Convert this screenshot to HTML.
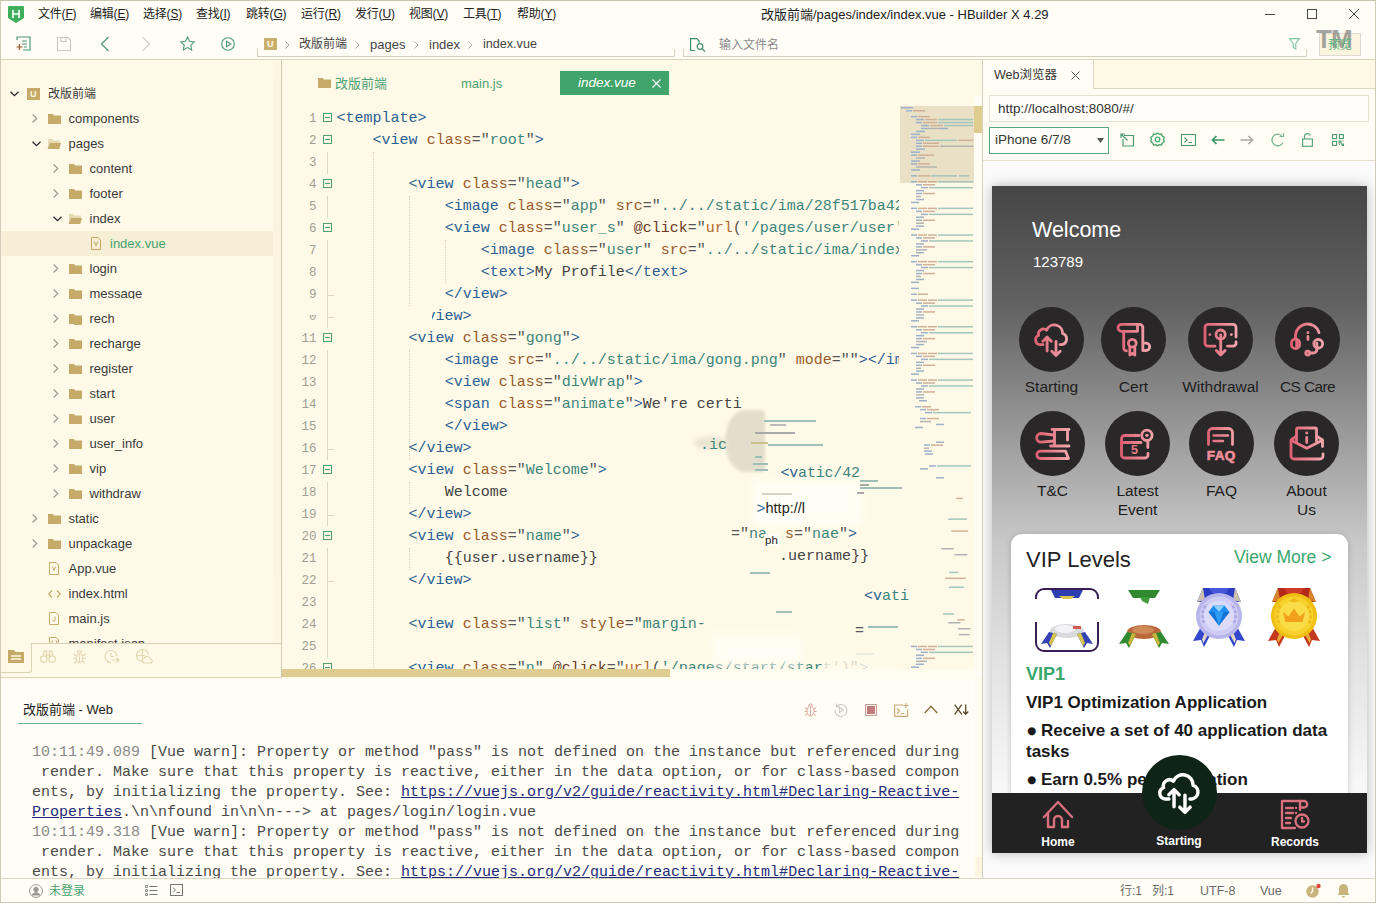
<!DOCTYPE html>
<html lang="zh-CN">
<head>
<meta charset="utf-8">
<title>HBuilder X</title>
<style>
*{box-sizing:border-box;margin:0;padding:0}
html,body{width:1376px;height:903px;overflow:hidden;background:#FFFAE8}
body{position:relative;font-family:"Liberation Sans","Noto Sans CJK SC",sans-serif;font-size:13px;color:#3b3b3b}
.abs{position:absolute}
.t{position:absolute;white-space:nowrap;line-height:1}
svg{position:absolute;overflow:visible}
/* top */
#top{position:absolute;left:0;top:0;width:1376px;height:59px;background:#FFFDF6}
#top .mi{position:absolute;top:7px;font-size:12px;line-height:15px;color:#222;white-space:nowrap;letter-spacing:-0.2px}
#top .mi u{text-decoration:underline;text-underline-offset:1px}
.bc{position:absolute;top:37px;font-size:13px;line-height:15px;color:#444;white-space:nowrap}
.bcs{position:absolute;top:38px;font-size:11px;line-height:13px;color:#999;font-family:"Liberation Sans",sans-serif}
/* sidebar */
#side{position:absolute;left:0;top:60px;width:281px;height:618px;background:#FFFAE8;overflow:hidden}
.row{position:absolute;left:0;width:273px;height:25px}
.row .lbl{position:absolute;top:5px;font-size:13px;line-height:16px;color:#3a3a3a;white-space:nowrap}
/* editor */
#ed{position:absolute;left:282px;top:60px;width:700px;height:618px;background:#FFFAE8;overflow:hidden}
.ln{position:absolute;left:0;width:700px;height:22px;font-family:"Liberation Mono","DejaVu Sans Mono",monospace;font-size:15px;line-height:22px;white-space:pre;color:#4a4a4a}
.ln .no{position:absolute;left:0;width:34.5px;text-align:right;color:#a0a092;font-size:12.500px}
.ln .cd{position:absolute;left:54.6px;top:0}
.ln .vl{position:absolute;left:45px;top:0;width:1px;height:22px;background:#ddd8c6}
.ln .tk{position:absolute;left:45px;top:11px;width:7px;height:1px;background:#ddd8c6}
.ev{color:#6b3a1e}
.tg{color:#2c5f93}.at{color:#9a5a2a}.st{color:#3d857b}.eq{color:#555}.fn{color:#b5662b}.tx{color:#444}
.fold{position:absolute;left:41px;top:5px;width:9px;height:9px;border:1px solid #4f9d73;background:#FFFAE8}
.fold:after{content:"";position:absolute;left:1px;top:3px;width:5px;height:1px;background:#4f9d73}
/* console */
#con{position:absolute;left:0;top:679px;width:982px;height:199px;background:#FFFDF5;overflow:hidden}
.cl{position:absolute;left:32px;font-family:"Liberation Mono","DejaVu Sans Mono",monospace;font-size:15px;line-height:20px;white-space:pre;color:#4a4a4a}
.cl .ts{color:#8a8a8a}
.cl .lk{color:#1e2c7a;text-decoration:underline}
/* status */
#stat{position:absolute;left:0;top:878px;width:1376px;height:25px;background:#FFFDF5;border-top:1px solid #dcd6bd}
/* right */
#right{position:absolute;left:983px;top:60px;width:393px;height:818px;background:#FFFCF3;overflow:hidden}
.cir{position:absolute;width:65px;height:65px;border-radius:50%;background:#2a2728}
.gl{position:absolute;width:120px;text-align:center;font-size:15.500px;line-height:19px;color:#1d1d1d}
.gtx{font-family:"Liberation Mono","DejaVu Sans Mono",monospace;font-size:15px;line-height:22px;white-space:pre;color:#4a4a4a}
</style>
</head>
<body>
<div id="top">
  <!-- app icon -->
  <svg style="left:8px;top:6px" width="16" height="17" viewBox="0 0 16 17"><path d="M1 0h14a1 1 0 0 1 1 1v11l-8 5-8-5V1a1 1 0 0 1 1-1z" fill="#3fae5a"/><path d="M5 4v8M11 4v8M5 8h6" stroke="#fff" stroke-width="1.6" fill="none"/></svg>
  <span class="mi" style="left:38px">文件(<u>F</u>)</span>
  <span class="mi" style="left:90px">编辑(<u>E</u>)</span>
  <span class="mi" style="left:143px">选择(<u>S</u>)</span>
  <span class="mi" style="left:196px">查找(<u>I</u>)</span>
  <span class="mi" style="left:246px">跳转(<u>G</u>)</span>
  <span class="mi" style="left:301px">运行(<u>R</u>)</span>
  <span class="mi" style="left:355px">发行(<u>U</u>)</span>
  <span class="mi" style="left:409px">视图(<u>V</u>)</span>
  <span class="mi" style="left:463px">工具(<u>T</u>)</span>
  <span class="mi" style="left:517px">帮助(<u>Y</u>)</span>
  <span class="t" id="title" style="left:761px;top:7px;font-size:13px;line-height:16px;color:#222">改版前端/pages/index/index.vue - HBuilder X 4.29</span>
</div>
<div class="abs" style="left:0;top:59px;width:1376px;height:1px;background:#d9d4ba"></div>
<div id="tb" class="abs" style="left:0;top:0;width:1376px;height:60px">
  <!-- window controls -->
  <div class="abs" style="left:1265px;top:14px;width:10px;height:1px;background:#444"></div>
  <div class="abs" style="left:1307px;top:9px;width:10px;height:10px;border:1px solid #444"></div>
  <svg style="left:1349px;top:9px" width="10" height="10" viewBox="0 0 10 10"><path d="M0 0L10 10M10 0L0 10" stroke="#444" stroke-width="1" fill="none"/></svg>
  <!-- toolbar icons -->
  <svg style="left:16px;top:36px" width="15" height="15" viewBox="0 0 15 15" fill="none" stroke="#4d9a73" stroke-width="1.2"><path d="M1 4V1h13v13H7"/><path d="M6 5h5M6 8h5M8 11h3"/><path d="M3.5 8v6M0.5 11h6" stroke="#a0522d"/></svg>
  <svg style="left:57px;top:37px" width="14" height="14" viewBox="0 0 14 14" fill="none" stroke="#c9c5b8" stroke-width="1.1"><path d="M.5.5h10.5l2.5 2.5v10.500H.5z"/><path d="M4 .5v4h5v-4"/></svg>
  <svg style="left:100px;top:36px" width="10" height="16" viewBox="0 0 10 16" fill="none" stroke="#4d9a73" stroke-width="1.3"><path d="M8.500 1L1.500 8l7 7"/></svg>
  <svg style="left:141px;top:36px" width="10" height="16" viewBox="0 0 10 16" fill="none" stroke="#d4d0c4" stroke-width="1.3"><path d="M1.500 1l7 7-7 7"/></svg>
  <svg style="left:180px;top:36px" width="15" height="15" viewBox="0 0 15 15" fill="none" stroke="#4d9a73" stroke-width="1.1"><path d="M7.500 1l2 4.300 4.700.600-3.400 3.300.8 4.700-4.100-2.300-4.100 2.300.8-4.700L.8 5.900l4.700-.6z"/></svg>
  <svg style="left:221px;top:37px" width="14" height="14" viewBox="0 0 14 14" fill="none" stroke="#4d9a73" stroke-width="1.1"><circle cx="7" cy="7" r="6.300"/><path d="M5.500 4.300v5.400L9.800 7z"/></svg>
  <!-- breadcrumb frame -->
  <div class="abs" style="left:257px;top:49px;width:418px;height:8px;border:1px solid #d6d1b8;border-top:none"></div>
  <div class="abs" style="left:264px;top:38px;width:13px;height:12px;background:#c9b06e"></div>
  <span class="t" style="left:267px;top:40px;font-size:9px;color:#fff8e0;font-weight:bold">U</span>
  <svg style="left:285px;top:41px" width="5" height="8" viewBox="0 0 5 8" fill="none" stroke="#aaa" stroke-width="1"><path d="M.5.500L4 4 .5 7.500"/></svg>
  <span class="bc" style="left:299px;font-size:12px">改版前端</span>
  <svg style="left:355px;top:41px" width="5" height="8" viewBox="0 0 5 8" fill="none" stroke="#aaa" stroke-width="1"><path d="M.5.500L4 4 .5 7.500"/></svg>
  <span class="bc" style="left:370px">pages</span>
  <svg style="left:414px;top:41px" width="5" height="8" viewBox="0 0 5 8" fill="none" stroke="#aaa" stroke-width="1"><path d="M.5.500L4 4 .5 7.500"/></svg>
  <span class="bc" style="left:429px">index</span>
  <svg style="left:468px;top:41px" width="5" height="8" viewBox="0 0 5 8" fill="none" stroke="#aaa" stroke-width="1"><path d="M.5.500L4 4 .5 7.500"/></svg>
  <span class="bc" style="left:483px;font-size:12.600px">index.vue</span>
  <!-- search frame -->
  <div class="abs" style="left:683px;top:49px;width:624px;height:8px;border:1px solid #d6d1b8;border-top:none"></div>
  <svg style="left:690px;top:38px" width="16" height="14" viewBox="0 0 16 14" fill="none" stroke="#3f8f68" stroke-width="1.2"><path d="M5 12.500H.6V.6h6l2.500 2.500v2"/><circle cx="10" cy="8.500" r="2.800"/><path d="M12 10.500l3 3"/></svg>
  <span class="t" style="left:719px;top:38px;font-size:12px;line-height:14px;color:#8a8a8a">输入文件名</span>
  <svg style="left:1289px;top:38px" width="11" height="12" viewBox="0 0 11 12" fill="none" stroke="#7cc7a0" stroke-width="1.1"><path d="M.6.600h9.800L6.800 5.500v5.500L4.200 9.500v-4z"/></svg>
  <div class="abs" style="left:1319px;top:33px;width:42px;height:23px;border:1px solid #dedbd0;background:#fbf4df"></div>
  <span class="t" style="left:1316px;top:27px;font-size:26px;line-height:24px;font-weight:bold;color:rgba(125,125,125,.7);letter-spacing:-1px;font-family:'Liberation Sans',sans-serif">TM</span>
  <span class="t" style="left:1328px;top:38px;font-size:12px;line-height:14px;color:#56b27c">预览</span>
</div>
<div id="side">
<div class="row" style="top:21px;"><svg style="left:10px;top:10px" width="9" height="6" viewBox="0 0 9 6" fill="none" stroke="#2b2b2b" stroke-width="1.300"><path d="M.5.700l4 4 4-4"/></svg><div class="abs" style="left:27px;top:7px;width:13px;height:12px;background:#c5aa69"></div><span class="t" style="left:30px;top:9px;font-size:9px;font-weight:bold;color:#fff6dc">U</span><span class="lbl" style="left:48px;font-size:12px;">改版前端</span></div>
<div class="row" style="top:46px;"><svg style="left:32px;top:8px" width="6" height="9" viewBox="0 0 6 9" fill="none" stroke="#9b9b93" stroke-width="1.200"><path d="M.7.500l4 4-4 4"/></svg><svg style="left:48px;top:8px" width="13" height="10" viewBox="0 0 13 10"><path d="M0 0h5l1 1.500h7V10H0z" fill="#c5aa69"/></svg><span class="lbl" style="left:68.5px;">components</span></div>
<div class="row" style="top:71px;"><svg style="left:32px;top:10px" width="9" height="6" viewBox="0 0 9 6" fill="none" stroke="#2b2b2b" stroke-width="1.300"><path d="M.5.700l4 4 4-4"/></svg><svg style="left:47px;top:8px" width="14" height="10" viewBox="0 0 14 10"><path d="M1 0h4.500l1 1.500H13V4H3L1 9z" fill="#e6dab4"/><path d="M3 4h11l-1.800 6H0.500z" fill="#c5aa69"/></svg><span class="lbl" style="left:68.5px;">pages</span></div>
<div class="row" style="top:96px;"><svg style="left:53px;top:8px" width="6" height="9" viewBox="0 0 6 9" fill="none" stroke="#9b9b93" stroke-width="1.200"><path d="M.7.500l4 4-4 4"/></svg><svg style="left:69px;top:8px" width="13" height="10" viewBox="0 0 13 10"><path d="M0 0h5l1 1.500h7V10H0z" fill="#c5aa69"/></svg><span class="lbl" style="left:89.5px;">content</span></div>
<div class="row" style="top:121px;"><svg style="left:53px;top:8px" width="6" height="9" viewBox="0 0 6 9" fill="none" stroke="#9b9b93" stroke-width="1.200"><path d="M.7.500l4 4-4 4"/></svg><svg style="left:69px;top:8px" width="13" height="10" viewBox="0 0 13 10"><path d="M0 0h5l1 1.500h7V10H0z" fill="#c5aa69"/></svg><span class="lbl" style="left:89.5px;">footer</span></div>
<div class="row" style="top:146px;"><svg style="left:53px;top:10px" width="9" height="6" viewBox="0 0 9 6" fill="none" stroke="#2b2b2b" stroke-width="1.300"><path d="M.5.700l4 4 4-4"/></svg><svg style="left:68px;top:8px" width="14" height="10" viewBox="0 0 14 10"><path d="M1 0h4.500l1 1.500H13V4H3L1 9z" fill="#e6dab4"/><path d="M3 4h11l-1.800 6H0.500z" fill="#c5aa69"/></svg><span class="lbl" style="left:89.5px;">index</span></div>
<div class="row" style="top:171px;background:#f6eed5;"><svg style="left:91px;top:6px" width="10" height="13" viewBox="0 0 10 13" fill="none" stroke="#c5aa69" stroke-width="1"><path d="M.5.500h6.500l2.500 2.500v9.500H.5z"/><path d="M3.300 4.500l1.700 4 1.700-4"/></svg><span class="lbl" style="left:110px;color:#47a26f;">index.vue</span></div>
<div class="row" style="top:196px;"><svg style="left:53px;top:8px" width="6" height="9" viewBox="0 0 6 9" fill="none" stroke="#9b9b93" stroke-width="1.200"><path d="M.7.500l4 4-4 4"/></svg><svg style="left:69px;top:8px" width="13" height="10" viewBox="0 0 13 10"><path d="M0 0h5l1 1.500h7V10H0z" fill="#c5aa69"/></svg><span class="lbl" style="left:89.5px;">login</span></div>
<div class="row" style="top:221px;"><svg style="left:53px;top:8px" width="6" height="9" viewBox="0 0 6 9" fill="none" stroke="#9b9b93" stroke-width="1.200"><path d="M.7.500l4 4-4 4"/></svg><svg style="left:69px;top:8px" width="13" height="10" viewBox="0 0 13 10"><path d="M0 0h5l1 1.500h7V10H0z" fill="#c5aa69"/></svg><span class="lbl" style="left:89.5px;">message</span></div>
<div class="row" style="top:246px;"><svg style="left:53px;top:8px" width="6" height="9" viewBox="0 0 6 9" fill="none" stroke="#9b9b93" stroke-width="1.200"><path d="M.7.500l4 4-4 4"/></svg><svg style="left:69px;top:8px" width="13" height="10" viewBox="0 0 13 10"><path d="M0 0h5l1 1.500h7V10H0z" fill="#c5aa69"/></svg><span class="lbl" style="left:89.5px;">rech</span></div>
<div class="row" style="top:271px;"><svg style="left:53px;top:8px" width="6" height="9" viewBox="0 0 6 9" fill="none" stroke="#9b9b93" stroke-width="1.200"><path d="M.7.500l4 4-4 4"/></svg><svg style="left:69px;top:8px" width="13" height="10" viewBox="0 0 13 10"><path d="M0 0h5l1 1.500h7V10H0z" fill="#c5aa69"/></svg><span class="lbl" style="left:89.5px;">recharge</span></div>
<div class="row" style="top:296px;"><svg style="left:53px;top:8px" width="6" height="9" viewBox="0 0 6 9" fill="none" stroke="#9b9b93" stroke-width="1.200"><path d="M.7.500l4 4-4 4"/></svg><svg style="left:69px;top:8px" width="13" height="10" viewBox="0 0 13 10"><path d="M0 0h5l1 1.500h7V10H0z" fill="#c5aa69"/></svg><span class="lbl" style="left:89.5px;">register</span></div>
<div class="row" style="top:321px;"><svg style="left:53px;top:8px" width="6" height="9" viewBox="0 0 6 9" fill="none" stroke="#9b9b93" stroke-width="1.200"><path d="M.7.500l4 4-4 4"/></svg><svg style="left:69px;top:8px" width="13" height="10" viewBox="0 0 13 10"><path d="M0 0h5l1 1.500h7V10H0z" fill="#c5aa69"/></svg><span class="lbl" style="left:89.5px;">start</span></div>
<div class="row" style="top:346px;"><svg style="left:53px;top:8px" width="6" height="9" viewBox="0 0 6 9" fill="none" stroke="#9b9b93" stroke-width="1.200"><path d="M.7.500l4 4-4 4"/></svg><svg style="left:69px;top:8px" width="13" height="10" viewBox="0 0 13 10"><path d="M0 0h5l1 1.500h7V10H0z" fill="#c5aa69"/></svg><span class="lbl" style="left:89.5px;">user</span></div>
<div class="row" style="top:371px;"><svg style="left:53px;top:8px" width="6" height="9" viewBox="0 0 6 9" fill="none" stroke="#9b9b93" stroke-width="1.200"><path d="M.7.500l4 4-4 4"/></svg><svg style="left:69px;top:8px" width="13" height="10" viewBox="0 0 13 10"><path d="M0 0h5l1 1.500h7V10H0z" fill="#c5aa69"/></svg><span class="lbl" style="left:89.5px;">user_info</span></div>
<div class="row" style="top:396px;"><svg style="left:53px;top:8px" width="6" height="9" viewBox="0 0 6 9" fill="none" stroke="#9b9b93" stroke-width="1.200"><path d="M.7.500l4 4-4 4"/></svg><svg style="left:69px;top:8px" width="13" height="10" viewBox="0 0 13 10"><path d="M0 0h5l1 1.500h7V10H0z" fill="#c5aa69"/></svg><span class="lbl" style="left:89.5px;">vip</span></div>
<div class="row" style="top:421px;"><svg style="left:53px;top:8px" width="6" height="9" viewBox="0 0 6 9" fill="none" stroke="#9b9b93" stroke-width="1.200"><path d="M.7.500l4 4-4 4"/></svg><svg style="left:69px;top:8px" width="13" height="10" viewBox="0 0 13 10"><path d="M0 0h5l1 1.500h7V10H0z" fill="#c5aa69"/></svg><span class="lbl" style="left:89.5px;">withdraw</span></div>
<div class="row" style="top:446px;"><svg style="left:32px;top:8px" width="6" height="9" viewBox="0 0 6 9" fill="none" stroke="#9b9b93" stroke-width="1.200"><path d="M.7.500l4 4-4 4"/></svg><svg style="left:48px;top:8px" width="13" height="10" viewBox="0 0 13 10"><path d="M0 0h5l1 1.500h7V10H0z" fill="#c5aa69"/></svg><span class="lbl" style="left:68.5px;">static</span></div>
<div class="row" style="top:471px;"><svg style="left:32px;top:8px" width="6" height="9" viewBox="0 0 6 9" fill="none" stroke="#9b9b93" stroke-width="1.200"><path d="M.7.500l4 4-4 4"/></svg><svg style="left:48px;top:8px" width="13" height="10" viewBox="0 0 13 10"><path d="M0 0h5l1 1.500h7V10H0z" fill="#c5aa69"/></svg><span class="lbl" style="left:68.5px;">unpackage</span></div>
<div class="row" style="top:496px;"><svg style="left:49px;top:6px" width="10" height="13" viewBox="0 0 10 13" fill="none" stroke="#c5aa69" stroke-width="1"><path d="M.5.500h6.500l2.500 2.500v9.500H.5z"/><path d="M3.300 4.500l1.700 4 1.700-4"/></svg><span class="lbl" style="left:68.5px;">App.vue</span></div>
<div class="row" style="top:521px;"><svg style="left:48px;top:9px" width="13" height="8" viewBox="0 0 13 8" fill="none" stroke="#c5aa69" stroke-width="1.200"><path d="M4 .500L.8 4 4 7.500M9 .500L12.200 4 9 7.500"/></svg><span class="lbl" style="left:68.5px;">index.html</span></div>
<div class="row" style="top:546px;"><svg style="left:49px;top:6px" width="10" height="13" viewBox="0 0 10 13" fill="none" stroke="#c5aa69" stroke-width="1"><path d="M.5.500h6.500l2.500 2.500v9.500H.5z"/><path d="M6 4.500v3.500a1.200 1.200 0 0 1-2.400 0"/></svg><span class="lbl" style="left:68.5px;">main.js</span></div>
<div class="row" style="top:571px;"><svg style="left:49px;top:6px" width="10" height="13" viewBox="0 0 10 13" fill="none" stroke="#c5aa69" stroke-width="1"><path d="M.5.500h6.500l2.500 2.500v9.500H.5z"/><path d="M4 4h-1v5h1M6.500 4h1v5h-1"/></svg><span class="lbl" style="left:68.5px;">manifest.json</span></div>
<div class="abs" style="left:86px;top:238.500px;width:60px;height:5px;background:#FFFAE8"></div>
<div class="abs" style="left:113.500px;top:249px;width:6px;height:16px;background:#FFFAE8"></div>
<div class="abs" style="left:74px;top:231px;width:8px;height:6px;background:#c5aa69"></div>
<div class="abs" style="left:74px;top:256px;width:8px;height:9px;background:#c5aa69"></div>
<div class="abs" style="left:273px;top:0;width:8px;height:583px;background:#fcf6e2"></div>
<div class="abs" style="left:273px;top:19px;width:8px;height:496px;background:#faf4e0"></div>
<div class="abs" style="left:0;top:583px;width:281px;height:35px;background:#FFFAE8"></div>
<div class="abs" style="left:31px;top:583px;width:250px;height:1px;background:#d9d3b8"></div>
<div class="abs" style="left:0px;top:583px;width:32px;height:30px;border:1px solid #d9d3b8;border-top:none;border-left:none;border-radius:0 0 3px 0;background:#FFFAE8"></div>
<svg style="left:8px;top:590px" width="16" height="13" viewBox="0 0 16 13"><path d="M0 0h6l1.500 2H16v11H0z" fill="#c5aa69"/><path d="M3 6h10M3 9h10" stroke="#FFFAE8" stroke-width="1.300"/></svg>
<svg style="left:40px;top:590px" width="16" height="13" viewBox="0 0 16 13" fill="none" stroke="#e3d7b1" stroke-width="1.300"><circle cx="3.800" cy="9" r="3.200"/><circle cx="12.200" cy="9" r="3.200"/><path d="M3 5.500l1.500-4.500h2v5M13 5.500L11.500 1h-2v5M6.500 5h3"/></svg>
<svg style="left:72px;top:589px" width="15" height="15" viewBox="0 0 15 15" fill="none" stroke="#e3d7b1" stroke-width="1.200"><ellipse cx="7.500" cy="9" rx="3.300" ry="4.500"/><path d="M7.500 4.500v9M5.500 4a2 2 0 0 1 4 0M4.200 7L1.500 5M10.800 7l2.700-2M4.200 9.500H1M10.800 9.500H14M4.500 12l-2.500 2M10.500 12l2.500 2M5 1.500L6 3M10 1.500L9 3"/></svg>
<svg style="left:104px;top:589px" width="16" height="15" viewBox="0 0 16 15" fill="none" stroke="#e3d7b1" stroke-width="1.200"><path d="M13 7a6 6 0 1 0-6 6.500"/><path d="M7 4v3.500h3"/><path d="M8 11h7M12.500 8.500L15 11l-2.500 2.500"/></svg>
<svg style="left:136px;top:589px" width="16" height="15" viewBox="0 0 16 15" fill="none" stroke="#e3d7b1" stroke-width="1.200"><path d="M6.500 12.500a6 6 0 1 1 6-7"/><path d="M6.500.5v12M.8 6.500h8"/><path d="M8 14h6a2 2 0 0 0 0-4 3 3 0 0 0-5.800-.5A2.300 2.300 0 0 0 8 14z"/></svg>
</div>
<div class="abs" style="left:281px;top:60px;width:1px;height:618px;background:#cfcab2"></div>
<div class="abs" style="left:0;top:677px;width:982px;height:1px;background:#d9d3b8"></div>
<div id="ed">
<svg style="left:36px;top:18px" width="13" height="10" viewBox="0 0 13 10"><path d="M0 0h5l1 1.500h7V10H0z" fill="#c5aa69"/></svg>
<span class="t" style="left:53px;top:16px;font-size:13px;line-height:15px;color:#4ca374">改版前端</span>
<span class="t" style="left:179px;top:16px;font-size:13px;line-height:15px;color:#4ca374">main.js</span>
<div class="abs" style="left:278px;top:11px;width:109px;height:24px;background:#41a56b"></div>
<span class="t" style="left:296px;top:15px;font-size:13.500px;line-height:16px;color:#fff;font-style:italic">index.vue</span>
<svg style="left:370px;top:19px" width="9" height="9" viewBox="0 0 9 9" fill="none" stroke="#fff" stroke-width="1.100"><path d="M.5.500l8 8M8.500.500l-8 8"/></svg>
<div class="abs" style="left:90.6px;top:92px;width:0;height:528px;border-left:1px dotted #d8d3c0"></div>
<div class="abs" style="left:126.6px;top:136px;width:0;height:132px;border-left:1px dotted #d8d3c0"></div>
<div class="abs" style="left:126.6px;top:290px;width:0;height:110px;border-left:1px dotted #d8d3c0"></div>
<div class="abs" style="left:126.6px;top:422px;width:0;height:22px;border-left:1px dotted #d8d3c0"></div>
<div class="abs" style="left:126.6px;top:488px;width:0;height:22px;border-left:1px dotted #d8d3c0"></div>
<div class="abs" style="left:162.6px;top:180px;width:0;height:44px;border-left:1px dotted #d8d3c0"></div>
<div class="ln" style="top:48px"><span class="no">1</span><i class="fold"></i><span class="cd"><span class="tg">&lt;template&gt;</span></span></div>
<div class="ln" style="top:70px"><span class="no">2</span><i class="fold"></i><span class="cd">    <span class="tg">&lt;view</span> <span class="at">class</span><span class="eq">=</span><span class="eq">"</span><span class="st">root</span><span class="eq">"</span><span class="tg">&gt;</span></span></div>
<div class="ln" style="top:92px"><span class="no">3</span><i class="vl"></i><span class="cd"></span></div>
<div class="ln" style="top:114px"><span class="no">4</span><i class="fold"></i><span class="cd">        <span class="tg">&lt;view</span> <span class="at">class</span><span class="eq">=</span><span class="eq">"</span><span class="st">head</span><span class="eq">"</span><span class="tg">&gt;</span></span></div>
<div class="ln" style="top:136px"><span class="no">5</span><i class="vl"></i><span class="cd">            <span class="tg">&lt;image</span> <span class="at">class</span><span class="eq">=</span><span class="eq">"</span><span class="st">app</span><span class="eq">"</span> <span class="at">src</span><span class="eq">=</span><span class="eq">"</span><span class="st">../../static/ima/28f517ba42a8e.png</span><span class="eq">"</span><span class="tg">&gt;</span></span></div>
<div class="ln" style="top:158px"><span class="no">6</span><i class="fold"></i><span class="cd">            <span class="tg">&lt;view</span> <span class="at">class</span><span class="eq">=</span><span class="eq">"</span><span class="st">user_s</span><span class="eq">"</span> <span class="ev">@click</span><span class="eq">=</span><span class="eq">"</span><span class="fn">url</span><span class="eq">(</span><span class="st">'/pages/user/user'</span><span class="eq">)</span><span class="eq">"</span><span class="tg">&gt;</span></span></div>
<div class="ln" style="top:180px"><span class="no">7</span><i class="vl"></i><span class="cd">                <span class="tg">&lt;image</span> <span class="at">class</span><span class="eq">=</span><span class="eq">"</span><span class="st">user</span><span class="eq">"</span> <span class="at">src</span><span class="eq">=</span><span class="eq">"</span><span class="st">../../static/ima/index/user.png</span><span class="eq">"</span><span class="tg">&gt;</span></span></div>
<div class="ln" style="top:202px"><span class="no">8</span><i class="vl"></i><span class="cd">                <span class="tg">&lt;text&gt;</span><span class="tx">My Profile</span><span class="tg">&lt;/text&gt;</span></span></div>
<div class="ln" style="top:224px"><span class="no">9</span><i class="vl"></i><i class="tk"></i><span class="cd">            <span class="tg">&lt;/view&gt;</span></span></div>
<div class="ln" style="top:246px"><span class="no">10</span><i class="vl"></i><i class="tk"></i><span class="cd">        <span class="tg">&lt;/view&gt;</span></span></div>
<div class="ln" style="top:268px"><span class="no">11</span><i class="fold"></i><span class="cd">        <span class="tg">&lt;view</span> <span class="at">class</span><span class="eq">=</span><span class="eq">"</span><span class="st">gong</span><span class="eq">"</span><span class="tg">&gt;</span></span></div>
<div class="ln" style="top:290px"><span class="no">12</span><i class="vl"></i><span class="cd">            <span class="tg">&lt;image</span> <span class="at">src</span><span class="eq">=</span><span class="eq">"</span><span class="st">../../static/ima/gong.png</span><span class="eq">"</span> <span class="at">mode</span><span class="eq">=</span><span class="eq">""</span><span class="tg">&gt;&lt;/image&gt;</span></span></div>
<div class="ln" style="top:312px"><span class="no">13</span><i class="vl"></i><span class="cd">            <span class="tg">&lt;view</span> <span class="at">class</span><span class="eq">=</span><span class="eq">"</span><span class="st">divWrap</span><span class="eq">"</span><span class="tg">&gt;</span></span></div>
<div class="ln" style="top:334px"><span class="no">14</span><i class="vl"></i><span class="cd">            <span class="tg">&lt;span</span> <span class="at">class</span><span class="eq">=</span><span class="eq">"</span><span class="st">animate</span><span class="eq">"</span><span class="tg">&gt;</span><span class="tx">We're certi</span></span></div>
<div class="ln" style="top:356px"><span class="no">15</span><i class="vl"></i><span class="cd">            <span class="tg">&lt;/view&gt;</span></span></div>
<div class="ln" style="top:378px"><span class="no">16</span><i class="vl"></i><i class="tk"></i><span class="cd">        <span class="tg">&lt;/view&gt;</span></span></div>
<div class="ln" style="top:400px"><span class="no">17</span><i class="fold"></i><span class="cd">        <span class="tg">&lt;view</span> <span class="at">class</span><span class="eq">=</span><span class="eq">"</span><span class="st">Welcome</span><span class="eq">"</span><span class="tg">&gt;</span></span></div>
<div class="ln" style="top:422px"><span class="no">18</span><i class="vl"></i><span class="cd">            <span class="tx">Welcome</span></span></div>
<div class="ln" style="top:444px"><span class="no">19</span><i class="vl"></i><i class="tk"></i><span class="cd">        <span class="tg">&lt;/view&gt;</span></span></div>
<div class="ln" style="top:466px"><span class="no">20</span><i class="fold"></i><span class="cd">        <span class="tg">&lt;view</span> <span class="at">class</span><span class="eq">=</span><span class="eq">"</span><span class="st">name</span><span class="eq">"</span><span class="tg">&gt;</span></span></div>
<div class="ln" style="top:488px"><span class="no">21</span><i class="vl"></i><span class="cd">            <span class="tx">{{user.username}}</span></span></div>
<div class="ln" style="top:510px"><span class="no">22</span><i class="vl"></i><i class="tk"></i><span class="cd">        <span class="tg">&lt;/view&gt;</span></span></div>
<div class="ln" style="top:532px"><span class="no">23</span><i class="vl"></i><span class="cd"></span></div>
<div class="ln" style="top:554px"><span class="no">24</span><i class="vl"></i><span class="cd">        <span class="tg">&lt;view</span> <span class="at">class</span><span class="eq">=</span><span class="eq">"</span><span class="st">list</span><span class="eq">"</span> <span class="at">style</span><span class="eq">=</span><span class="eq">"</span><span class="st">margin-</span></span></div>
<div class="ln" style="top:576px"><span class="no">25</span><i class="vl"></i><span class="cd"></span></div>
<div class="ln" style="top:598px"><span class="no">26</span><i class="fold"></i><span class="cd">        <span class="tg">&lt;view</span> <span class="at">class</span><span class="eq">=</span><span class="eq">"</span><span class="st">n</span><span class="eq">"</span> <span class="ev">@click</span><span class="eq">=</span><span class="eq">"</span><span class="fn">url</span><span class="eq">(</span><span class="st">'/pages/start/start'</span><span class="eq">)</span><span class="eq">"</span><span class="tg">&gt;</span></span></div>
<div class="abs" style="left:617px;top:36px;width:83px;height:582px;background:#FFFAE8"></div>
<div class="abs" style="left:618px;top:46px;width:74px;height:77px;background:#e9e0c6"></div>
<svg style="left:619px;top:0" width="72" height="618" viewBox="0 0 72 618"><rect x="0.0" y="47.0" width="12.0" height="1.500" fill="#9db1c8"/><rect x="5.0" y="50.0" width="6.0" height="1.500" fill="#9db1c8"/><rect x="12.0" y="50.0" width="12.0" height="1.500" fill="#d0b198"/><rect x="10.0" y="55.9" width="6.0" height="1.500" fill="#9db1c8"/><rect x="17.0" y="55.9" width="12.0" height="1.500" fill="#d0b198"/><rect x="15.0" y="58.8" width="8.0" height="1.500" fill="#9db1c8"/><rect x="24.0" y="58.8" width="12.0" height="1.500" fill="#d0b198"/><rect x="37.0" y="58.8" width="35.0" height="1.500" fill="#a5c6bd"/><rect x="15.0" y="61.8" width="6.0" height="1.500" fill="#9db1c8"/><rect x="22.0" y="61.8" width="14.0" height="1.500" fill="#d0b198"/><rect x="37.0" y="61.8" width="35.0" height="1.500" fill="#a5c6bd"/><rect x="20.0" y="64.8" width="8.0" height="1.500" fill="#9db1c8"/><rect x="29.0" y="64.8" width="13.0" height="1.500" fill="#d0b198"/><rect x="43.0" y="64.8" width="29.0" height="1.500" fill="#a5c6bd"/><rect x="20.0" y="67.7" width="7.0" height="1.500" fill="#9db1c8"/><rect x="27.0" y="67.7" width="12.0" height="1.500" fill="#b3b3b3"/><rect x="39.0" y="67.7" width="8.0" height="1.500" fill="#9db1c8"/><rect x="15.0" y="70.7" width="9.0" height="1.500" fill="#9db1c8"/><rect x="10.0" y="73.6" width="9.0" height="1.500" fill="#9db1c8"/><rect x="10.0" y="76.6" width="6.0" height="1.500" fill="#9db1c8"/><rect x="17.0" y="76.6" width="12.0" height="1.500" fill="#d0b198"/><rect x="15.0" y="79.6" width="8.0" height="1.500" fill="#9db1c8"/><rect x="24.0" y="79.6" width="32.0" height="1.500" fill="#a5c6bd"/><rect x="57.0" y="79.6" width="15.0" height="1.500" fill="#d0b198"/><rect x="15.0" y="82.5" width="6.0" height="1.500" fill="#9db1c8"/><rect x="22.0" y="82.5" width="16.0" height="1.500" fill="#d0b198"/><rect x="15.0" y="85.5" width="6.0" height="1.500" fill="#9db1c8"/><rect x="22.0" y="85.5" width="16.0" height="1.500" fill="#d0b198"/><rect x="39.0" y="85.5" width="33.0" height="1.500" fill="#b3b3b3"/><rect x="15.0" y="88.4" width="9.0" height="1.500" fill="#9db1c8"/><rect x="10.0" y="91.4" width="9.0" height="1.500" fill="#9db1c8"/><rect x="10.0" y="94.4" width="6.0" height="1.500" fill="#9db1c8"/><rect x="17.0" y="94.4" width="16.0" height="1.500" fill="#d0b198"/><rect x="15.0" y="97.3" width="9.0" height="1.500" fill="#b3b3b3"/><rect x="10.0" y="100.3" width="9.0" height="1.500" fill="#9db1c8"/><rect x="10.0" y="103.2" width="6.0" height="1.500" fill="#9db1c8"/><rect x="17.0" y="103.2" width="12.0" height="1.500" fill="#d0b198"/><rect x="15.0" y="106.2" width="21.0" height="1.500" fill="#b3b3b3"/><rect x="10.0" y="109.2" width="9.0" height="1.500" fill="#9db1c8"/><rect x="10.0" y="115.1" width="6.0" height="1.500" fill="#9db1c8"/><rect x="17.0" y="115.1" width="12.0" height="1.500" fill="#d0b198"/><rect x="30.0" y="115.1" width="26.0" height="1.500" fill="#a5c6bd"/><rect x="58.0" y="115.1" width="10.0" height="1.500" fill="#a5c6bd"/><rect x="10.0" y="121.0" width="6.0" height="1.500" fill="#9db1c8"/><rect x="17.0" y="121.0" width="9.0" height="1.500" fill="#d0b198"/><rect x="27.0" y="121.0" width="9.0" height="1.500" fill="#d0b198"/><rect x="37.0" y="121.0" width="35.0" height="1.500" fill="#a5c6bd"/><rect x="15.0" y="124.0" width="6.0" height="1.500" fill="#9db1c8"/><rect x="22.0" y="124.0" width="12.0" height="1.500" fill="#d0b198"/><rect x="20.0" y="126.9" width="7.0" height="1.500" fill="#9db1c8"/><rect x="28.0" y="126.9" width="44.0" height="1.500" fill="#a5c6bd"/><rect x="15.0" y="129.9" width="8.0" height="1.500" fill="#9db1c8"/><rect x="15.0" y="132.8" width="6.0" height="1.500" fill="#9db1c8"/><rect x="22.0" y="132.8" width="12.0" height="1.500" fill="#d0b198"/><rect x="15.0" y="135.8" width="5.0" height="1.500" fill="#b3b3b3"/><rect x="15.0" y="138.8" width="8.0" height="1.500" fill="#9db1c8"/><rect x="10.0" y="141.7" width="8.0" height="1.500" fill="#9db1c8"/><rect x="10.0" y="147.6" width="6.0" height="1.500" fill="#9db1c8"/><rect x="17.0" y="147.6" width="9.0" height="1.500" fill="#d0b198"/><rect x="27.0" y="147.6" width="9.0" height="1.500" fill="#d0b198"/><rect x="37.0" y="147.6" width="35.0" height="1.500" fill="#a5c6bd"/><rect x="15.0" y="150.6" width="6.0" height="1.500" fill="#9db1c8"/><rect x="22.0" y="150.6" width="12.0" height="1.500" fill="#d0b198"/><rect x="20.0" y="153.6" width="7.0" height="1.500" fill="#9db1c8"/><rect x="28.0" y="153.6" width="44.0" height="1.500" fill="#a5c6bd"/><rect x="15.0" y="156.5" width="8.0" height="1.500" fill="#9db1c8"/><rect x="15.0" y="159.5" width="6.0" height="1.500" fill="#9db1c8"/><rect x="22.0" y="159.5" width="12.0" height="1.500" fill="#d0b198"/><rect x="15.0" y="162.4" width="8.0" height="1.500" fill="#b3b3b3"/><rect x="15.0" y="165.4" width="8.0" height="1.500" fill="#9db1c8"/><rect x="10.0" y="168.4" width="8.0" height="1.500" fill="#9db1c8"/><rect x="10.0" y="174.3" width="6.0" height="1.500" fill="#9db1c8"/><rect x="17.0" y="174.3" width="9.0" height="1.500" fill="#d0b198"/><rect x="27.0" y="174.3" width="9.0" height="1.500" fill="#d0b198"/><rect x="37.0" y="174.3" width="35.0" height="1.500" fill="#a5c6bd"/><rect x="15.0" y="177.2" width="6.0" height="1.500" fill="#9db1c8"/><rect x="22.0" y="177.2" width="12.0" height="1.500" fill="#d0b198"/><rect x="20.0" y="180.2" width="7.0" height="1.500" fill="#9db1c8"/><rect x="28.0" y="180.2" width="44.0" height="1.500" fill="#a5c6bd"/><rect x="15.0" y="183.2" width="8.0" height="1.500" fill="#9db1c8"/><rect x="15.0" y="186.1" width="6.0" height="1.500" fill="#9db1c8"/><rect x="22.0" y="186.1" width="12.0" height="1.500" fill="#d0b198"/><rect x="15.0" y="189.1" width="11.0" height="1.500" fill="#b3b3b3"/><rect x="15.0" y="192.0" width="8.0" height="1.500" fill="#9db1c8"/><rect x="10.0" y="195.0" width="8.0" height="1.500" fill="#9db1c8"/><rect x="10.0" y="200.9" width="6.0" height="1.500" fill="#9db1c8"/><rect x="17.0" y="200.9" width="9.0" height="1.500" fill="#d0b198"/><rect x="27.0" y="200.9" width="9.0" height="1.500" fill="#d0b198"/><rect x="37.0" y="200.9" width="35.0" height="1.500" fill="#a5c6bd"/><rect x="15.0" y="203.9" width="6.0" height="1.500" fill="#9db1c8"/><rect x="22.0" y="203.9" width="12.0" height="1.500" fill="#d0b198"/><rect x="20.0" y="206.8" width="7.0" height="1.500" fill="#9db1c8"/><rect x="28.0" y="206.8" width="44.0" height="1.500" fill="#a5c6bd"/><rect x="15.0" y="209.8" width="8.0" height="1.500" fill="#9db1c8"/><rect x="15.0" y="212.8" width="6.0" height="1.500" fill="#9db1c8"/><rect x="22.0" y="212.8" width="12.0" height="1.500" fill="#d0b198"/><rect x="15.0" y="215.7" width="5.0" height="1.500" fill="#b3b3b3"/><rect x="15.0" y="218.7" width="8.0" height="1.500" fill="#9db1c8"/><rect x="10.0" y="221.6" width="8.0" height="1.500" fill="#9db1c8"/><rect x="10.0" y="227.6" width="8.0" height="1.500" fill="#9db1c8"/><rect x="10.0" y="233.5" width="6.0" height="1.500" fill="#9db1c8"/><rect x="17.0" y="233.5" width="10.0" height="1.500" fill="#d0b198"/><rect x="10.0" y="239.4" width="6.0" height="1.500" fill="#9db1c8"/><rect x="17.0" y="239.4" width="9.0" height="1.500" fill="#d0b198"/><rect x="27.0" y="239.4" width="9.0" height="1.500" fill="#d0b198"/><rect x="37.0" y="239.4" width="35.0" height="1.500" fill="#a5c6bd"/><rect x="15.0" y="242.4" width="6.0" height="1.500" fill="#9db1c8"/><rect x="22.0" y="242.4" width="12.0" height="1.500" fill="#d0b198"/><rect x="20.0" y="245.3" width="7.0" height="1.500" fill="#9db1c8"/><rect x="28.0" y="245.3" width="44.0" height="1.500" fill="#a5c6bd"/><rect x="15.0" y="248.3" width="8.0" height="1.500" fill="#9db1c8"/><rect x="15.0" y="251.2" width="6.0" height="1.500" fill="#9db1c8"/><rect x="22.0" y="251.2" width="12.0" height="1.500" fill="#d0b198"/><rect x="15.0" y="254.2" width="8.0" height="1.500" fill="#b3b3b3"/><rect x="15.0" y="257.2" width="8.0" height="1.500" fill="#9db1c8"/><rect x="10.0" y="260.1" width="8.0" height="1.500" fill="#9db1c8"/><rect x="10.0" y="266.0" width="6.0" height="1.500" fill="#9db1c8"/><rect x="17.0" y="266.0" width="9.0" height="1.500" fill="#d0b198"/><rect x="27.0" y="266.0" width="9.0" height="1.500" fill="#d0b198"/><rect x="37.0" y="266.0" width="35.0" height="1.500" fill="#a5c6bd"/><rect x="15.0" y="269.0" width="6.0" height="1.500" fill="#9db1c8"/><rect x="22.0" y="269.0" width="12.0" height="1.500" fill="#d0b198"/><rect x="20.0" y="272.0" width="7.0" height="1.500" fill="#9db1c8"/><rect x="28.0" y="272.0" width="44.0" height="1.500" fill="#a5c6bd"/><rect x="15.0" y="274.9" width="8.0" height="1.500" fill="#9db1c8"/><rect x="15.0" y="277.9" width="6.0" height="1.500" fill="#9db1c8"/><rect x="22.0" y="277.9" width="12.0" height="1.500" fill="#d0b198"/><rect x="15.0" y="280.8" width="11.0" height="1.500" fill="#b3b3b3"/><rect x="15.0" y="283.8" width="8.0" height="1.500" fill="#9db1c8"/><rect x="10.0" y="286.8" width="8.0" height="1.500" fill="#9db1c8"/><rect x="10.0" y="292.7" width="6.0" height="1.500" fill="#9db1c8"/><rect x="17.0" y="292.7" width="9.0" height="1.500" fill="#d0b198"/><rect x="27.0" y="292.7" width="9.0" height="1.500" fill="#d0b198"/><rect x="37.0" y="292.7" width="35.0" height="1.500" fill="#a5c6bd"/><rect x="15.0" y="295.6" width="6.0" height="1.500" fill="#9db1c8"/><rect x="22.0" y="295.6" width="12.0" height="1.500" fill="#d0b198"/><rect x="20.0" y="298.6" width="7.0" height="1.500" fill="#9db1c8"/><rect x="28.0" y="298.6" width="44.0" height="1.500" fill="#a5c6bd"/><rect x="15.0" y="301.6" width="8.0" height="1.500" fill="#9db1c8"/><rect x="15.0" y="304.5" width="6.0" height="1.500" fill="#9db1c8"/><rect x="22.0" y="304.5" width="12.0" height="1.500" fill="#d0b198"/><rect x="15.0" y="307.5" width="5.0" height="1.500" fill="#b3b3b3"/><rect x="15.0" y="310.4" width="8.0" height="1.500" fill="#9db1c8"/><rect x="10.0" y="313.4" width="8.0" height="1.500" fill="#9db1c8"/><rect x="10.0" y="319.3" width="6.0" height="1.500" fill="#9db1c8"/><rect x="17.0" y="319.3" width="9.0" height="1.500" fill="#d0b198"/><rect x="27.0" y="319.3" width="9.0" height="1.500" fill="#d0b198"/><rect x="37.0" y="319.3" width="35.0" height="1.500" fill="#a5c6bd"/><rect x="15.0" y="322.3" width="6.0" height="1.500" fill="#9db1c8"/><rect x="22.0" y="322.3" width="12.0" height="1.500" fill="#d0b198"/><rect x="20.0" y="325.2" width="7.0" height="1.500" fill="#9db1c8"/><rect x="28.0" y="325.2" width="44.0" height="1.500" fill="#a5c6bd"/><rect x="15.0" y="328.2" width="8.0" height="1.500" fill="#9db1c8"/><rect x="15.0" y="331.2" width="6.0" height="1.500" fill="#9db1c8"/><rect x="22.0" y="331.2" width="12.0" height="1.500" fill="#d0b198"/><rect x="15.0" y="334.1" width="8.0" height="1.500" fill="#b3b3b3"/><rect x="15.0" y="337.1" width="8.0" height="1.500" fill="#9db1c8"/><rect x="18.0" y="340.0" width="8.0" height="1.500" fill="#9db1c8"/><rect x="14.0" y="346.0" width="6.0" height="1.500" fill="#9db1c8"/><rect x="21.0" y="346.0" width="9.0" height="1.500" fill="#d0b198"/><rect x="19.0" y="348.9" width="6.0" height="1.500" fill="#9db1c8"/><rect x="26.0" y="348.9" width="12.0" height="1.500" fill="#d0b198"/><rect x="24.0" y="351.9" width="7.0" height="1.500" fill="#9db1c8"/><rect x="32.0" y="351.9" width="38.0" height="1.500" fill="#a5c6bd"/><rect x="19.0" y="357.8" width="6.0" height="1.500" fill="#9db1c8"/><rect x="26.0" y="357.8" width="12.0" height="1.500" fill="#d0b198"/><rect x="19.0" y="360.8" width="11.0" height="1.500" fill="#b3b3b3"/><rect x="35.0" y="363.7" width="8.0" height="1.500" fill="#9db1c8"/><rect x="14.0" y="366.7" width="8.0" height="1.500" fill="#9db1c8"/><rect x="35.0" y="381.5" width="8.0" height="1.500" fill="#9db1c8"/><rect x="23.0" y="384.4" width="6.0" height="1.500" fill="#9db1c8"/><rect x="30.0" y="384.4" width="12.0" height="1.500" fill="#d0b198"/><rect x="23.0" y="387.4" width="5.0" height="1.500" fill="#b3b3b3"/><rect x="23.0" y="390.4" width="8.0" height="1.500" fill="#9db1c8"/><rect x="24.0" y="393.3" width="8.0" height="1.500" fill="#9db1c8"/><rect x="28.0" y="405.2" width="7.0" height="1.500" fill="#9db1c8"/><rect x="36.0" y="405.2" width="34.0" height="1.500" fill="#a5c6bd"/><rect x="19.0" y="408.1" width="8.0" height="1.500" fill="#9db1c8"/><rect x="35.0" y="417.0" width="8.0" height="1.500" fill="#9db1c8"/><rect x="55.2" y="437.7" width="6.7" height="1.500" fill="#d0b198"/><rect x="47.2" y="458.4" width="18.7" height="1.500" fill="#a5c6bd"/><rect x="50.3" y="470.3" width="16.8" height="1.500" fill="#d0b198"/><rect x="40.1" y="488.0" width="12.5" height="1.500" fill="#b3b3b3"/><rect x="53.4" y="494.0" width="12.8" height="1.500" fill="#b3b3b3"/><rect x="48.2" y="511.7" width="8.7" height="1.500" fill="#a5c6bd"/><rect x="44.3" y="517.6" width="20.5" height="1.500" fill="#d0b198"/><rect x="47.9" y="526.5" width="14.9" height="1.500" fill="#a5c6bd"/><rect x="41.9" y="553.2" width="11.1" height="1.500" fill="#a5c6bd"/><rect x="56.3" y="559.1" width="7.4" height="1.500" fill="#d0b198"/><rect x="47.2" y="562.0" width="12.2" height="1.500" fill="#b3b3b3"/><rect x="56.9" y="568.0" width="12.7" height="1.500" fill="#b3b3b3"/><rect x="57.8" y="573.9" width="10.8" height="1.500" fill="#b3b3b3"/><rect x="10.0" y="585.7" width="6.0" height="1.500" fill="#9db1c8"/><rect x="17.0" y="585.7" width="9.0" height="1.500" fill="#d0b198"/><rect x="27.0" y="585.7" width="9.0" height="1.500" fill="#d0b198"/><rect x="37.0" y="585.7" width="35.0" height="1.500" fill="#a5c6bd"/><rect x="15.0" y="588.7" width="6.0" height="1.500" fill="#9db1c8"/><rect x="22.0" y="588.7" width="12.0" height="1.500" fill="#d0b198"/><rect x="20.0" y="591.6" width="7.0" height="1.500" fill="#9db1c8"/><rect x="28.0" y="591.6" width="44.0" height="1.500" fill="#a5c6bd"/><rect x="15.0" y="594.6" width="8.0" height="1.500" fill="#9db1c8"/><rect x="15.0" y="597.6" width="6.0" height="1.500" fill="#9db1c8"/><rect x="22.0" y="597.6" width="12.0" height="1.500" fill="#d0b198"/><rect x="15.0" y="600.5" width="11.0" height="1.500" fill="#b3b3b3"/><rect x="15.0" y="603.5" width="8.0" height="1.500" fill="#9db1c8"/><rect x="10.0" y="606.4" width="8.0" height="1.500" fill="#9db1c8"/><rect x="10.0" y="612.4" width="6.0" height="1.500" fill="#9db1c8"/><rect x="17.0" y="612.4" width="9.0" height="1.500" fill="#d0b198"/><rect x="27.0" y="612.4" width="9.0" height="1.500" fill="#d0b198"/><rect x="37.0" y="612.4" width="35.0" height="1.500" fill="#a5c6bd"/></svg>
<div class="abs" style="left:443px;top:350px;width:40px;height:62px;background:#e3decb;border-radius:60% 10% 10% 60%;filter:blur(1.500px)"></div>
<div class="abs" style="left:412px;top:376px;width:34px;height:14px;background:#ebe6d3;border-radius:50%;filter:blur(2px)"></div>
<div class="abs" style="left:470px;top:420px;width:110px;height:46px;background:#fffdf3;filter:blur(4px)"></div>
<div class="abs" style="left:476px;top:434px;width:44px;height:27px;background:#fffef8"></div>
<div class="abs" style="left:482px;top:360px;width:52px;height:1.500px;background:#9dbfb6"></div>
<div class="abs" style="left:488px;top:364px;width:16px;height:1.500px;background:#bbb"></div>
<div class="abs" style="left:473px;top:372px;width:40px;height:1.500px;background:#a9a9a9"></div>
<div class="abs" style="left:469px;top:382px;width:17px;height:1.500px;background:#c9c08a"></div>
<div class="abs" style="left:486px;top:384px;width:55px;height:1.500px;background:#9dbfb6"></div>
<div class="abs" style="left:473px;top:396px;width:7px;height:1.500px;background:#9dbfb6"></div>
<div class="abs" style="left:471px;top:403px;width:15px;height:1.500px;background:#9dbfb6"></div>
<div class="abs" style="left:473px;top:409px;width:13px;height:1.500px;background:#9dbfb6"></div>
<div class="abs" style="left:578px;top:420px;width:18px;height:1.500px;background:#9dbfb6"></div>
<div class="abs" style="left:578px;top:424px;width:9px;height:1.500px;background:#a9a9a9"></div>
<div class="abs" style="left:578px;top:427px;width:42px;height:1.500px;background:#9dbfb6"></div>
<div class="abs" style="left:575px;top:432px;width:7px;height:1.500px;background:#a9a9a9"></div>
<div class="abs" style="left:480px;top:433px;width:30px;height:1.500px;background:#d5d2c6"></div>
<div class="abs" style="left:468px;top:512px;width:20px;height:1.500px;background:#9dbfb6"></div>
<div class="abs" style="left:494px;top:551px;width:16px;height:1.500px;background:#9dbfb6"></div>
<div class="abs" style="left:586px;top:566px;width:30px;height:1.500px;background:#9dbfb6"></div>
<div class="abs" style="left:574px;top:593px;width:18px;height:1.500px;background:#9dbfb6"></div>
<span class="abs gtx" style="left:418px;top:375px;"><span class="st">.ic</span></span>
<span class="abs gtx" style="left:498.5px;top:403px;letter-spacing:-.2px"><span class="tg">&lt;v</span><span class="st">atic/</span><span class="st">42</span></span>
<span class="abs gtx" style="left:474.5px;top:437px;"><span class="tg">&gt;</span><span style="font-family:Liberation Sans,sans-serif;color:#222;font-size:14.500px">http://l</span></span>
<span class="abs gtx" style="left:449px;top:464px;"><span class="eq">="</span><span class="st">na</span>  <span class="at">s</span><span class="eq">="</span><span class="st">nae</span><span class="eq">"</span><span class="tg">&gt;</span></span>
<span class="abs" style="left:482px;top:474px;font-family:Liberation Sans,sans-serif;font-size:11.500px;line-height:12px;color:#222;background:#fffdf5;padding:0 1px">ph</span>
<span class="abs gtx" style="left:497px;top:486px;"><span class="tx">.uername}}</span></span>
<span class="abs gtx" style="left:582px;top:526px;"><span class="tg">&lt;v</span><span class="st">ati</span></span>
<span class="abs gtx" style="left:573px;top:561px;"><span class="eq">=</span></span>
<div class="abs" style="left:540px;top:592px;width:78px;height:18px;background:#FFFAE8;opacity:.8"></div>
<div class="abs" style="left:430px;top:575px;width:90px;height:30px;background:#fffdf3;filter:blur(6px)"></div>
<div class="abs" style="left:125px;top:246px;width:25px;height:22px;background:#FFFAE8"></div>
<div class="abs" style="left:12px;top:246px;width:15px;height:22px;background:#FFFAE8"></div>
<div class="abs" style="left:26px;top:246px;width:10px;height:9px;background:#FFFAE8"></div>
<div class="abs" style="left:691.500px;top:36px;width:9px;height:582px;background:#fffdf3"></div>
<div class="abs" style="left:692px;top:46px;width:8px;height:27px;background:#dfcd8f"></div>
<div class="abs" style="left:0;top:609px;width:692px;height:9px;background:#fffcf0"></div>
<div class="abs" style="left:0;top:609px;width:388px;height:8px;background:#dfcd8f"></div>
</div>
<div class="abs" style="left:982px;top:60px;width:1px;height:818px;background:#d4cfb8"></div>
<div id="right">
  <!-- tab bar -->
  <div class="abs" style="left:0;top:0;width:393px;height:29px;background:#FFF9E5;border-bottom:1px solid #ddd8c0"></div>
  <div class="abs" style="left:0;top:0;width:111px;height:29px;background:#FFFDF6;border-right:1px solid #ddd8c0"></div>
  <span class="t" style="left:11px;top:7px;font-size:12.500px;line-height:16px;color:#333">Web浏览器</span>
  <svg style="left:88px;top:11px" width="9" height="9" viewBox="0 0 9 9" fill="none" stroke="#555" stroke-width="1"><path d="M.5.500l8 8M8.500.500l-8 8"/></svg>
  <!-- url -->
  <div class="abs" style="left:6px;top:35px;width:380px;height:27px;background:#FFFEFA;border:1px solid #e6e2d0"></div>
  <span class="t" style="left:15px;top:41px;font-size:13.500px;line-height:16px;color:#333">http://localhost:8080/#/</span>
  <!-- select -->
  <div class="abs" style="left:6px;top:67px;width:120px;height:27px;background:#FFFEFA;border:1px solid #5aa57f"></div>
  <span class="t" style="left:12px;top:72px;font-size:13.500px;line-height:16px;color:#333">iPhone 6/7/8</span>
  <svg style="left:114px;top:78px" width="7" height="5" viewBox="0 0 7 5"><path d="M0 0h7L3.500 5z" fill="#555"/></svg>
  <!-- tool icons -->
  <svg style="left:137px;top:73px" width="15" height="14" viewBox="0 0 15 14" fill="none" stroke="#4a9b72" stroke-width="1.200"><path d="M4 2.500h9.500v10.500H3V6"/><path d="M1 1l6.500 6.500M1 5V1h4"/></svg>
  <svg style="left:167px;top:72px" width="15" height="15" viewBox="0 0 15 15" fill="none" stroke="#46a86e" stroke-width="1.300"><circle cx="7.500" cy="7.500" r="2.300"/><path d="M7.500 1l1.800 1.300 2.200-.3.800 2.100 1.900 1.200-.7 2.200.7 2.200-1.900 1.200-.8 2.100-2.200-.3L7.500 14l-1.800-1.300-2.200.3-.8-2.100L.8 9.700l.7-2.200-.7-2.200 1.900-1.200.8-2.100 2.200.3z"/></svg>
  <svg style="left:198px;top:74px" width="15" height="12" viewBox="0 0 15 12" fill="none" stroke="#4a9b72" stroke-width="1.100"><rect x=".5" y=".5" width="14" height="11"/><path d="M3.500 3.500L6 6 3.500 8.500M7.500 8.500h3.500"/></svg>
  <svg style="left:228px;top:75px" width="14" height="10" viewBox="0 0 14 10" fill="none" stroke="#3d9565" stroke-width="1.700"><path d="M13.500 5H1.500M5.500 1L1.500 5l4 4"/></svg>
  <svg style="left:257px;top:75px" width="14" height="10" viewBox="0 0 14 10" fill="none" stroke="#a9a9a4" stroke-width="1.700"><path d="M.5 5h12M8.500 1l4 4-4 4"/></svg>
  <svg style="left:288px;top:73px" width="14" height="14" viewBox="0 0 14 14" fill="none" stroke="#7ab996" stroke-width="1.300"><path d="M12 9.500A5.800 5.800 0 1 1 10.500 2.500"/><path d="M8.500 3.500h4V0" stroke-width="1.100"/></svg>
  <svg style="left:319px;top:72px" width="11" height="15" viewBox="0 0 11 15" fill="none" stroke="#5aa97f" stroke-width="1.200"><rect x=".6" y="7" width="9.800" height="7.300"/><path d="M2.500 7V4.500a3 3 0 0 1 5.800-1"/></svg>
  <svg style="left:349px;top:74px" width="12" height="12" viewBox="0 0 12 12" fill="none" stroke="#4a9b72" stroke-width="1.100"><rect x=".6" y=".6" width="4" height="4"/><rect x="7.400" y=".6" width="4" height="4"/><rect x=".6" y="7.400" width="4" height="4"/><path d="M7 7h2v2H7zM10 10h1.500v1.500H10zM10.500 7h1M7 10.500h1"/></svg>
  <!-- preview area -->
  <div class="abs" style="left:0;top:100px;width:393px;height:718px;background:#FBFBFB;border-top:1px solid #e5dfcc"></div>
  <div id="ph" class="abs" style="left:9px;top:126px;width:375px;height:667px;overflow:hidden;background:linear-gradient(#464646 0px,#626262 120px,#959595 237px,#c8c8c8 354px,#e2e2e2 474px,#f8f8f8 604px,#f8f8f8 667px);box-shadow:0 0 12px rgba(0,0,0,.28);font-family:'Liberation Sans',sans-serif">
    <svg width="0" height="0" style="left:0;top:0"><defs>
      <linearGradient id="pk" gradientUnits="userSpaceOnUse" x1="14" y1="0" x2="52" y2="0"><stop offset="0" stop-color="#dc5a6e"/><stop offset="1" stop-color="#f4aeb2"/></linearGradient>
    </defs></svg>
    <span class="t" style="left:40px;top:31px;font-size:21.500px;line-height:26px;color:#fff">Welcome</span>
    <span class="t" style="left:41px;top:67px;font-size:15px;line-height:18px;color:#fff">123789</span>
    <!-- row 1 circles -->
    <div class="cir" style="left:27px;top:121px"></div>
    <div class="cir" style="left:109px;top:121px"></div>
    <div class="cir" style="left:196px;top:121px"></div>
    <div class="cir" style="left:283px;top:121px"></div>
    <div class="cir" style="left:28px;top:225px"></div>
    <div class="cir" style="left:113px;top:225px"></div>
    <div class="cir" style="left:197px;top:225px"></div>
    <div class="cir" style="left:282px;top:225px"></div>
    <span class="gl" style="left:-0.500px;top:191px">Starting</span>
    <span class="gl" style="left:81.500px;top:191px">Cert</span>
    <span class="gl" style="left:168.500px;top:191px">Withdrawal</span>
    <span class="gl" style="left:255.500px;top:191px;letter-spacing:-.6px">CS Care</span>
    <span class="gl" style="left:0.500px;top:295px">T&amp;C</span>
    <span class="gl" style="left:85.500px;top:295px">Latest<br>Event</span>
    <span class="gl" style="left:169.500px;top:295px">FAQ</span>
    <span class="gl" style="left:254.500px;top:295px">About<br>Us</span>
    <!-- icon 1 cloud arrows : circle origin 27,121 -->
    <svg style="left:27px;top:121px" width="65" height="65" viewBox="0 0 65 65" fill="none" stroke="url(#pk)" stroke-width="2.800" stroke-linecap="round" stroke-linejoin="round">
      <path d="M24 37.600h-3a4.700 4.700 0 0 1-1.400-9.100 5 5 0 0 1 8-5.300 8.300 8.300 0 0 1 16 3.300 5.700 5.700 0 0 1-1.100 11.100h-1.500"/>
      <path d="M28.100 44V30.200M23.900 34.200l4.200-4.200 4.200 4.200M37 34.500v14M32.800 44.300l4.200 4.200 4.200-4.200"/>
    </svg>
    <!-- icon 2 cert : origin 109,121 -->
    <svg style="left:109px;top:121px" width="65" height="65" viewBox="0 0 65 65" fill="none" stroke="url(#pk)" stroke-width="2.800" stroke-linecap="round" stroke-linejoin="round">
      <path d="M36.500 17.300H20.500a3.500 3.500 0 0 0 0 7H36.500z"/>
      <path d="M22.700 24.500V41a2.800 2.800 0 0 0 2.800 2.800"/>
      <path d="M36.500 17.300h2a3.300 3.300 0 0 1 3.300 3.300V43.500h3.200a3.700 3.700 0 0 0 0-7.400H41.800"/>
      <circle cx="31.300" cy="36.200" r="3.900"/>
      <path d="M28.800 40.500v7.500l2.500-1.700 2.500 1.700v-7.500"/>
    </svg>
    <!-- icon 3 withdrawal : origin 196,121 -->
    <svg style="left:196px;top:121px" width="65" height="65" viewBox="0 0 65 65" fill="none" stroke="url(#pk)" stroke-width="2.800" stroke-linecap="round" stroke-linejoin="round">
      <path d="M27 39.200h-7a3 3 0 0 1-3-3V20.300a3 3 0 0 1 3-3h25a3 3 0 0 1 3 3v9.700M48 35v1.200a3 3 0 0 1-3 3H39.500"/>
      <circle cx="32.600" cy="27.600" r="4.600"/>
      <path d="M32.700 28v19.500M28.300 43.500l4.400 4.400 4.400-4.400"/>
      <path d="M21.800 27.600h.1M43.300 27.600h.1"/>
    </svg>
    <!-- icon 4 headset : origin 283,121 -->
    <svg style="left:283px;top:121px" width="65" height="65" viewBox="0 0 65 65" fill="none" stroke="url(#pk)" stroke-width="2.800" stroke-linecap="round" stroke-linejoin="round">
      <path d="M20.500 31.500v-2.700a12 12 0 0 1 23.500-3.200"/>
      <rect x="16.400" y="32" width="8.200" height="9.500" rx="4.100"/><path d="M21.700 32.500v8.500"/>
      <rect x="38.800" y="32.500" width="8.800" height="8.500" rx="4.250"/><path d="M41.800 36.200v6.300a3.500 3.500 0 0 1-3.500 3.500H35.500"/>
      <circle cx="32.700" cy="46.100" r="2"/>
      <path d="M32.900 25.700h.1M32.900 29.500v3"/>
    </svg>
    <!-- icon 5 gavel : origin 28,225 -->
    <svg style="left:28px;top:225px" width="65" height="65" viewBox="0 0 65 65" fill="none" stroke="url(#pk)" stroke-width="2.800" stroke-linecap="round" stroke-linejoin="round">
      <path d="M32 18.500h17M47.500 18.500V29M34.500 18.500V35M30.500 35H49"/>
      <path d="M34 24l-13-1.500a4.300 4.300 0 0 0 0 8.700L34 30"/>
      <path d="M48.500 47.500H20.500a3.700 3.700 0 0 1 0-7.400h25z"/>
    </svg>
    <!-- icon 6 calendar : origin 113,225 -->
    <svg style="left:113px;top:225px" width="65" height="65" viewBox="0 0 65 65" fill="none" stroke="url(#pk)" stroke-width="2.800" stroke-linecap="round" stroke-linejoin="round">
      <path d="M34 24.500H19.500a3 3 0 0 0-3 3V44a3 3 0 0 0 3 3h20.500a3 3 0 0 0 3-3v-1.500"/>
      <path d="M17 31.500h19" /><path d="M21 24.500h.1M25.500 24.500h.1M30 24.500h.1" stroke-width="3.400"/>
      <circle cx="41.900" cy="24.300" r="5.200"/><path d="M41.900 24.300h.1" stroke-width="3.200"/>
      <path d="M42.800 30v6.500"/>
      <text x="29.500" y="42.700" text-anchor="middle" font-family="Liberation Sans,sans-serif" font-weight="bold" font-size="12.500" fill="url(#pk)" stroke="none">5</text>
    </svg>
    <!-- icon 7 FAQ : origin 197,225 -->
    <svg style="left:197px;top:225px" width="65" height="65" viewBox="0 0 65 65" fill="none" stroke="url(#pk)" stroke-width="2.800" stroke-linecap="round" stroke-linejoin="round">
      <path d="M19.500 33.500V21.500a4 4 0 0 1 4-4h16a4 4 0 0 1 4 4v12"/>
      <path d="M24.500 24.500h14.500M24.500 30h9.500" stroke-width="2.400"/>
      <text x="32.200" y="48.600" text-anchor="middle" font-family="Liberation Sans,sans-serif" font-weight="bold" font-size="13.500" fill="#ef8d98" stroke="#ef8d98" stroke-width=".7" letter-spacing=".3">FAQ</text>
    </svg>
    <!-- icon 8 about : origin 282,225 -->
    <svg style="left:282px;top:225px" width="65" height="65" viewBox="0 0 65 65" fill="none" stroke="url(#pk)" stroke-width="2.800" stroke-linecap="round" stroke-linejoin="round">
      <path d="M22.500 30V18.500a1.500 1.500 0 0 1 1.500-1.500h17a1.500 1.500 0 0 1 1.500 1.500V30"/>
      <path d="M22 25.500l-5 3.500v16a3 3 0 0 0 3 3h26a3 3 0 0 0 3-3v-2M43 25.500l5.500 3.500v6.500"/>
      <path d="M17.500 29.500l15.200 7.800 15.200-7.800"/>
      <path d="M32.700 22h.1M32.700 26.500v5"/>
    </svg>
    <!-- VIP card -->
    <div class="abs" style="left:19px;top:348px;width:337px;height:340px;background:#fff;border-radius:11px;box-shadow:0 1px 6px rgba(0,0,0,.18)"></div>
    <span class="t" style="left:34px;top:360px;font-size:22px;line-height:27px;color:#222">VIP Levels</span>
    <span class="t" style="left:242px;top:361px;font-size:17.500px;line-height:21px;color:#3aa76d">View More &gt;</span>
    <!-- badge 1 (selected, glitched) -->
    <div class="abs" style="left:43px;top:402px;width:64px;height:64px;border:2px solid #3a1d57;border-radius:9px"></div>
    <svg style="left:43px;top:402px" width="64" height="64" viewBox="0 0 64 64">
      <path d="M16 2h32l-4 8H20z" fill="#2d3fb0"/><path d="M24 8h16l-8 6z" fill="#d8c64a"/>
      <ellipse cx="32" cy="43" rx="17" ry="7" fill="#d9d9de"/><ellipse cx="30" cy="41" rx="10" ry="4" fill="#f2f2f5"/>
      <path d="M14 44l8 2-7 14-3-5-6 1z" fill="#3643b4"/><path d="M18 45l4 1-6 12-2-3z" fill="#d8c64a"/>
      <path d="M50 44l-8 2 7 14 3-5 6 1z" fill="#3643b4"/><path d="M46 45l-4 1 6 12 2-3z" fill="#d8c64a"/>
      <rect x="38" y="38" width="8" height="3" fill="#d05a50"/>
    </svg>
    <div class="abs" style="left:38px;top:413px;width:74px;height:23px;background:#fff"></div>
    <!-- badge 2 (glitched) -->
    <svg style="left:126px;top:402px" width="52" height="64" viewBox="0 0 52 64">
      <path d="M10 2h32l-5 8H15z" fill="#2f8a2f"/><path d="M22 9h10l-2 7-6-3z" fill="#3f9d3a"/>
      <ellipse cx="26" cy="44" rx="17" ry="7" fill="#b9683a"/><ellipse cx="25" cy="42" rx="11" ry="4" fill="#cf8a5a"/>
      <path d="M9 44l9 2-7 14-3-5-7 1z" fill="#2f8a2f"/><path d="M14 45l4 1-6 12-2-3z" fill="#c9b43a"/>
      <path d="M43 44l-9 2 7 14 3-5 7 1z" fill="#2f8a2f"/><path d="M38 45l-4 1 6 12 2-3z" fill="#c9b43a"/>
    </svg>
    <!-- badge 3 diamond -->
    <svg style="left:200px;top:401px" width="54" height="62" viewBox="0 0 54 62">
      <path d="M11 1h32l6 14H5z" fill="#2a3cc4"/><path d="M11 1L5 15l8-2zM43 1l6 14-8-2z" fill="#cdbfae"/><path d="M17 1h20l-3 5H20z" fill="#4257dc"/>
      <path d="M10 38l11 5-9 17-3-7-8 1z" fill="#3347cc"/><path d="M44 38l-11 5 9 17 3-7 8 1z" fill="#3347cc"/>
      <path d="M14.500 41l4 2-7 13-1.500-3.500z" fill="#e3d6c4"/><path d="M39.500 41l-4 2 7 13 1.500-3.500z" fill="#e3d6c4"/>
      <circle cx="27" cy="29" r="23" fill="#b7b5ec"/><circle cx="27" cy="29" r="19.500" fill="#cfcdf5"/><circle cx="27" cy="29" r="15" fill="#dcdbfa"/>
      <path d="M12 36a17 17 0 0 1 3-19M42 36a17 17 0 0 0-3-19" stroke="#a9a6e4" stroke-width="2.500" fill="none" stroke-dasharray="3 2"/>
      <path d="M16.500 25l5-6.500h11l5 6.500-10.500 13.500z" fill="#1d8df0"/><path d="M16.500 25h21l-10.500 13.500z" fill="#1272d6"/><path d="M21.500 18.500l5.500 6.500 5.500-6.500z" fill="#8fd0ff"/><path d="M22.500 25h9l-4.500 13.500z" fill="#2f9cf5"/>
    </svg>
    <!-- badge 4 gold -->
    <svg style="left:275px;top:401px" width="54" height="62" viewBox="0 0 54 62">
      <path d="M11 1h32l6 14H5z" fill="#b32a1b"/><path d="M11 1L5 15l8-2zM43 1l6 14-8-2z" fill="#d9862a"/><path d="M17 1h20l-3 5H20z" fill="#cf3d28"/>
      <path d="M10 38l11 5-9 17-3-7-8 1z" fill="#c3391d"/><path d="M44 38l-11 5 9 17 3-7 8 1z" fill="#c3391d"/>
      <path d="M14.500 41l4 2-7 13-1.500-3.500z" fill="#e9a733"/><path d="M39.500 41l-4 2 7 13 1.500-3.500z" fill="#e9a733"/>
      <circle cx="27" cy="29" r="23" fill="#f1bf12"/><circle cx="27" cy="29" r="19.500" fill="#f7d22e"/><circle cx="27" cy="29" r="15" fill="#f9dc48"/>
      <path d="M12 36a17 17 0 0 1 3-19M42 36a17 17 0 0 0-3-19" stroke="#eeb91a" stroke-width="2.500" fill="none" stroke-dasharray="3 2"/>
      <path d="M18.500 35l-2.500-10 5.500 4.500 5.500-8 5.500 8 5.500-4.500-2.500 10z" fill="#f0a01a"/><path d="M22 14l5-3 5 3-5 1.500z" fill="#eeb91a"/>
    </svg>
    <span class="t" style="left:34px;top:477px;font-size:18px;line-height:22px;color:#3aa76d;font-weight:bold">VIP1</span>
    <span class="t" style="left:34px;top:507px;font-size:17px;line-height:20px;color:#1a1a1a;font-weight:bold">VIP1 Optimization Application</span>
    <span class="t" style="left:35px;top:535px;font-size:17px;line-height:20px;color:#1a1a1a;font-weight:bold"><span style="font-size:10.500px;position:relative;top:-2px;font-family:'DejaVu Sans',sans-serif">●</span> Receive a set of 40 application data</span>
    <span class="t" style="left:34px;top:556px;font-size:17px;line-height:20px;color:#1a1a1a;font-weight:bold">tasks</span>
    <span class="t" style="left:35px;top:584px;font-size:17px;line-height:20px;color:#1a1a1a;font-weight:bold"><span style="font-size:10.500px;position:relative;top:-2px;font-family:'DejaVu Sans',sans-serif">●</span> Earn 0.5% per application</span>
    <!-- bottom nav -->
    <div class="abs" style="left:0;top:607px;width:375px;height:60px;background:#222"></div>
    <div class="abs" style="left:150px;top:568.500px;width:75px;height:75px;border-radius:50%;background:#0f2418"></div>
    <svg style="left:150px;top:568.500px" width="75" height="75" viewBox="0 0 75 75" fill="none" stroke="#fff" stroke-width="3.400" stroke-linecap="round" stroke-linejoin="round">
      <g transform="translate(37.500 37.800) scale(1.230) translate(-32.550 -32.600)" stroke-width="2.800">
        <path d="M24 37.600h-3a4.700 4.700 0 0 1-1.400-9.100 5 5 0 0 1 8-5.300 8.300 8.300 0 0 1 16 3.300 5.700 5.700 0 0 1-1.100 11.100h-1.500"/>
        <path d="M28.100 44V30.200M23.900 34.200l4.200-4.200 4.200 4.200M37 34.500v14M32.800 44.300l4.200 4.200 4.200-4.200"/>
      </g>
    </svg>
    <svg style="left:50px;top:613px" width="32" height="32" viewBox="0 0 32 32" fill="none" stroke="#d9707e" stroke-width="2.400" stroke-linecap="round" stroke-linejoin="round">
      <path d="M2 18L16 3l14 15"/><path d="M6 15v13h6v-7a4 4 0 0 1 8 0v7h6v-6"/>
    </svg>
    <svg style="left:287px;top:613px" width="32" height="32" viewBox="0 0 32 32" fill="none" stroke="#d9707e" stroke-width="2.300" stroke-linecap="round" stroke-linejoin="round">
      <path d="M16 29H3V2h18v9"/><path d="M21 2h4a2.500 2.500 0 0 1 0 6.500h-4"/>
      <path d="M7 9h7M7 14h7M7 19h5M7 24h4M17 9h.1M17 14h.1"/>
      <circle cx="23" cy="22" r="6.500"/><path d="M23 19v3.500h2"/>
    </svg>
    <span class="t" style="left:26px;top:648px;width:80px;text-align:center;font-size:12px;line-height:16px;color:#fff;font-weight:bold">Home</span>
    <span class="t" style="left:147px;top:647px;width:80px;text-align:center;font-size:12px;line-height:16px;color:#fff;font-weight:bold">Starting</span>
    <span class="t" style="left:263px;top:648px;width:80px;text-align:center;font-size:12px;line-height:16px;color:#fff;font-weight:bold">Records</span>
  </div>
</div>
<div id="con">
  <span class="t" style="left:23px;top:23px;font-size:13px;line-height:16px;color:#222">改版前端 - Web</span>
  <div class="abs" style="left:18px;top:44px;width:124px;height:1px;background:#6db58e"></div>
  <!-- console tool icons -->
  <svg style="left:804px;top:24px" width="13" height="14" viewBox="0 0 13 14" fill="none" stroke="#dcaa9c" stroke-width="1"><ellipse cx="6.500" cy="8" rx="3.500" ry="5"/><path d="M6.500 3.500v9.500M4.500 3a2 2 0 0 1 4 0M3 6L.8 4.500M10 6l2.200-1.500M3 8.500H.5M10 8.500h2.500M3.300 11L1 12.500M9.700 11l2.300 1.500"/></svg>
  <svg style="left:834px;top:24px" width="14" height="14" viewBox="0 0 14 14" fill="none" stroke="#cbc6c2" stroke-width="1.100"><path d="M2.500 3.500A6 6 0 1 1 1 7"/><path d="M2.500.500v3.500h3.500"/><path d="M5.500 4.500v5l4-2.500z"/></svg>
  <div class="abs" style="left:865px;top:25px;width:12px;height:12px;border:1px solid #c99a9a;background:#fff7ea"></div>
  <div class="abs" style="left:867px;top:27px;width:8px;height:8px;background:#c07c7c"></div>
  <svg style="left:894px;top:24px" width="15" height="14" viewBox="0 0 15 14" fill="none" stroke="#caa978" stroke-width="1.100"><path d="M9 2H.6v11.400h13V6.500"/><path d="M3 5.500L5.500 8 3 10.500M7 10.500h3.500"/><path d="M12 0v5M9.500 2.500h5"/></svg>
  <svg style="left:924px;top:26px" width="14" height="9" viewBox="0 0 14 9" fill="none" stroke="#8a6d3e" stroke-width="1.300"><path d="M.7 8L7 1.200 13.300 8"/></svg>
  <svg style="left:954px;top:25px" width="15" height="11" viewBox="0 0 15 11" fill="none" stroke="#5b4a2c" stroke-width="1.300"><path d="M.7.700l7 9.600M7.700.700l-7 9.600"/><path d="M11.700.500v9.500M9.200 7.500l2.500 2.800 2.500-2.800"/></svg>
  <div class="cl" style="top:64px"><span class="ts">10:11:49.089</span> [Vue warn]: Property or method "pass" is not defined on the instance but referenced during</div>
  <div class="cl" style="top:84px"> render. Make sure that this property is reactive, either in the data option, or for class-based compon</div>
  <div class="cl" style="top:104px">ents, by initializing the property. See: <span class="lk">https://vuejs.org/v2/guide/reactivity.html#Declaring-Reactive-</span></div>
  <div class="cl" style="top:124px"><span class="lk">Properties</span>.\n\nfound in\n\n---&gt; at pages/login/login.vue</div>
  <div class="cl" style="top:144px"><span class="ts">10:11:49.318</span> [Vue warn]: Property or method "pass" is not defined on the instance but referenced during</div>
  <div class="cl" style="top:164px"> render. Make sure that this property is reactive, either in the data option, or for class-based compon</div>
  <div class="cl" style="top:184px">ents, by initializing the property. See: <span class="lk">https://vuejs.org/v2/guide/reactivity.html#Declaring-Reactive-</span></div>
  <div class="abs" style="left:975px;top:0;width:7px;height:199px;background:#fffbee"></div>
  <div class="abs" style="left:975px;top:178px;width:7px;height:19px;background:#faf4e0"></div>
</div>
<div id="stat">
  <svg style="left:29px;top:5px" width="14" height="14" viewBox="0 0 14 14" fill="none" stroke="#9a9a92" stroke-width="1"><circle cx="7" cy="7" r="6.400"/><circle cx="7" cy="5.500" r="2.300" fill="#9a9a92"/><path d="M2.800 11.500a4.500 4.500 0 0 1 8.400 0" fill="#9a9a92"/></svg>
  <span class="t" style="left:49px;top:5px;font-size:12px;line-height:14px;color:#47a26f">未登录</span>
  <svg style="left:145px;top:6px" width="13" height="11" viewBox="0 0 13 11" fill="none" stroke="#777" stroke-width="1"><path d="M4.500 1.500h8M4.500 5.500h8M4.500 9.500h8"/><path d="M.5.500h2v2h-2zM.5 4.500h2v2h-2zM.5 8.500h2v2h-2z" stroke-width=".8"/></svg>
  <svg style="left:170px;top:5px" width="13" height="12" viewBox="0 0 13 12" fill="none" stroke="#777" stroke-width="1"><rect x=".5" y=".5" width="12" height="11"/><path d="M3 3.500L5.500 6 3 8.500M6.500 8.500h3.500"/></svg>
  <span class="t" style="left:1120px;top:5px;font-size:12px;line-height:14px;color:#6a6a6a">行:1</span>
  <span class="t" style="left:1152px;top:5px;font-size:12px;line-height:14px;color:#6a6a6a">列:1</span>
  <span class="t" style="left:1200px;top:5px;font-size:12.500px;line-height:14px;color:#6a6a6a">UTF-8</span>
  <span class="t" style="left:1260px;top:5px;font-size:12.500px;line-height:14px;color:#6a6a6a">Vue</span>
  <svg style="left:1306px;top:4px" width="16" height="15" viewBox="0 0 16 15"><circle cx="6.500" cy="8.500" r="6.200" fill="#c9b57c"/><path d="M6.500 4.500v4l-2 2" stroke="#fffcf1" stroke-width="1.300" fill="none"/><circle cx="12.500" cy="3" r="2.200" fill="#e0473a"/></svg>
  <svg style="left:1337px;top:4px" width="13" height="15" viewBox="0 0 13 15"><path d="M6.500 1a4.500 4.500 0 0 1 4.500 4.500V10l1.500 2H.5L2 10V5.500A4.500 4.500 0 0 1 6.500 1z" fill="#c9b57c"/><path d="M5 13h3a1.500 1.500 0 0 1-3 0z" fill="#c9b57c"/></svg>
</div>
<div class="abs" style="left:0;top:0;width:1376px;height:1px;background:#c9c5b0"></div>
<div class="abs" style="left:0;top:0;width:1px;height:903px;background:#cfcbb8"></div>
<div class="abs" style="left:1375px;top:0;width:1px;height:903px;background:#cfcbb8"></div>
<div class="abs" style="left:0;top:902px;width:1376px;height:1px;background:#cfcbb8"></div>
</body>
</html>
